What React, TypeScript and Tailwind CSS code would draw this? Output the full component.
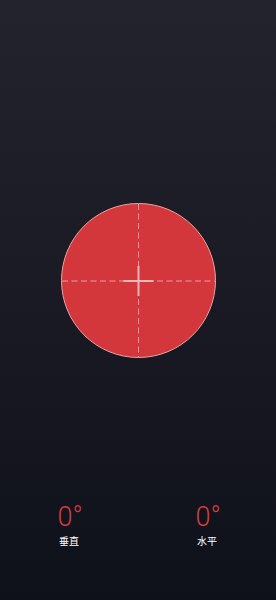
export default function App() {
  return (
    <div
      className="relative w-[276px] h-[600px] overflow-hidden flex flex-col items-center bg-gradient-to-b from-[#23232d] to-[#0f111a]"
      style={{ fontFamily: 'Roboto, "Noto Sans CJK SC", sans-serif' }}
    >
      <div className="mt-[203px] relative w-[155px] h-[155px] rounded-full bg-[#d4373b] border border-[#e7a3a3] overflow-hidden">
        <svg className="absolute inset-0" width="153" height="153" viewBox="0 0 153 153">
          <line x1="0" y1="77" x2="153" y2="77" stroke="#f29a9a" strokeWidth="1" strokeDasharray="6 3.5" />
          <line x1="76.5" y1="0" x2="76.5" y2="153" stroke="#f29a9a" strokeWidth="1" strokeDasharray="6 3.5" />
          <line x1="61.5" y1="77" x2="91.5" y2="77" stroke="#f8b6b6" strokeWidth="2" />
          <line x1="76.5" y1="62" x2="76.5" y2="92" stroke="#f8b6b6" strokeWidth="2" />
        </svg>
      </div>
      <div className="mt-[144px] w-full grid grid-cols-2">
        <div className="flex flex-col items-center">
          <div className="text-[27px] leading-[30px] font-light text-[#d9393d] pl-[2px]">0°</div>
          <div className="mt-[4px] text-[10px] leading-[12px] text-white">垂直</div>
        </div>
        <div className="flex flex-col items-center">
          <div className="text-[27px] leading-[30px] font-light text-[#d9393d] pl-[2px]">0°</div>
          <div className="mt-[4px] text-[10px] leading-[12px] text-white">水平</div>
        </div>
      </div>
    </div>
  );
}
